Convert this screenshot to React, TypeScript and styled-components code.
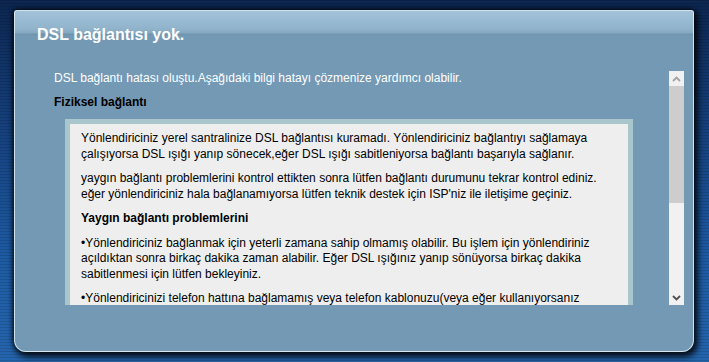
import React from "react";
import styled, { createGlobalStyle } from "styled-components";

const GlobalStyle = createGlobalStyle`
  html, body { margin: 0; padding: 0; }
  body {
    width: 709px;
    height: 362px;
    overflow: hidden;
    font-family: "Liberation Sans", Arial, sans-serif;
  }
`;

const Page = styled.div`
  box-sizing: border-box;
  width: 709px;
  height: 362px;
  padding: 10px 15px 10px 14px;
  background:
    repeating-linear-gradient(to bottom, rgba(0, 0, 0, 0.12) 0, rgba(0, 0, 0, 0.12) 1px, transparent 1px, transparent 3px),
    linear-gradient(to bottom, #0c2650 0%, #15407c 35%, #1d5aa2 70%, #2565ad 100%);
`;

const Panel = styled.div`
  box-sizing: border-box;
  width: 680px;
  height: 342px;
  display: flex;
  flex-direction: column;
  border: 1px solid rgba(225, 238, 246, 0.85);
  border-radius: 3px 3px 12px 12px;
  background: linear-gradient(
    to bottom,
    #a2c2d9 0px,
    #90b3cb 18px,
    #86a9c1 22px,
    #6f94ad 23px,
    #7399b5 25px,
    #7399b5 100%
  );
  box-shadow: 2px 3px 6px 2px rgba(0, 0, 0, 0.85), -1px -1px 4px rgba(0, 0, 0, 0.6);
`;

const Title = styled.h1`
  margin: 0;
  padding: 15px 0 0 22px;
  font-size: 16px;
  line-height: 18px;
  font-weight: bold;
  color: #ffffff;
`;

const ContentRow = styled.div`
  display: flex;
  margin: 27px 9px 0 35px;
  height: 234px;
`;

const ScrollArea = styled.div`
  flex: 1;
  overflow: hidden;
  padding: 0 0 0 4px;
`;

const Intro = styled.p`
  margin: 0;
  font-size: 12px;
  line-height: 14px;
  color: #ffffff;
`;

const SectionTitle = styled.p`
  margin: 10px 0 0;
  font-size: 12px;
  line-height: 14px;
  font-weight: bold;
  color: #000000;
`;

const InfoBox = styled.div`
  margin: 10px 36px 0 11px;
  border: 5px solid #a8c6cc;
  background: #eeeeee;
  padding: 7px 10px 10px 11px;
  color: #000000;
`;

const Para = styled.p<{ $bold?: boolean }>`
  margin: 0 0 9px;
  font-size: 12px;
  line-height: 15.5px;
  font-weight: ${(p) => (p.$bold ? "bold" : "normal")};
`;

const Scrollbar = styled.div`
  width: 15px;
  display: flex;
  flex-direction: column;
  background: #f1f1f1;
`;

const ScrollButton = styled.div`
  height: 15px;
  display: flex;
  align-items: center;
  justify-content: center;
  background: #f1f1f1;
`;

const Thumb = styled.div`
  height: 117px;
  background: #cdcdcd;
`;

const Track = styled.div`
  flex: 1;
`;

const Chevron = ({ up, color }: { up?: boolean; color: string }) => (
  <svg width="9" height="6" viewBox="0 0 9 6">
    <polyline
      points={up ? "1,5 4.5,1.5 8,5" : "1,1 4.5,4.5 8,1"}
      fill="none"
      stroke={color}
      strokeWidth="1.8"
    />
  </svg>
);

export default function App() {
  return (
    <>
      <GlobalStyle />
      <Page>
        <Panel>
          <Title>DSL bağlantısı yok.</Title>
          <ContentRow>
            <ScrollArea>
              <Intro>DSL bağlantı hatası oluştu.Aşağıdaki bilgi hatayı çözmenize yardımcı olabilir.</Intro>
              <SectionTitle>Fiziksel bağlantı</SectionTitle>
              <InfoBox>
                <Para>
                  Yönlendiriciniz yerel santralinize DSL bağlantısı kuramadı. Yönlendiriciniz bağlantıyı sağlamaya
                  çalışıyorsa DSL ışığı yanıp sönecek,eğer DSL ışığı sabitleniyorsa bağlantı başarıyla sağlanır.
                </Para>
                <Para>
                  yaygın bağlantı problemlerini kontrol ettikten sonra lütfen bağlantı durumunu tekrar kontrol ediniz.
                  eğer yönlendiriciniz hala bağlanamıyorsa lütfen teknik destek için ISP'niz ile iletişime geçiniz.
                </Para>
                <Para $bold>Yaygın bağlantı problemlerini</Para>
                <Para>
                  •Yönlendiriciniz bağlanmak için yeterli zamana sahip olmamış olabilir. Bu işlem için yönlendiriniz
                  açıldıktan sonra birkaç dakika zaman alabilir. Eğer DSL ışığınız yanıp sönüyorsa birkaç dakika
                  sabitlenmesi için lütfen bekleyiniz.
                </Para>
                <Para>
                  •Yönlendiricinizi telefon hattına bağlamamış veya telefon kablonuzu(veya eğer kullanıyorsanız
                  splitter'ı) düzgün bir şekilde bağlamamış olabilirsiniz. Lütfen kablo bağlantılarını kontrol ediniz.
                </Para>
              </InfoBox>
            </ScrollArea>
            <Scrollbar>
              <ScrollButton>
                <Chevron up color="#a3a3a3" />
              </ScrollButton>
              <Thumb />
              <Track />
              <ScrollButton>
                <Chevron color="#505050" />
              </ScrollButton>
            </Scrollbar>
          </ContentRow>
        </Panel>
      </Page>
    </>
  );
}
